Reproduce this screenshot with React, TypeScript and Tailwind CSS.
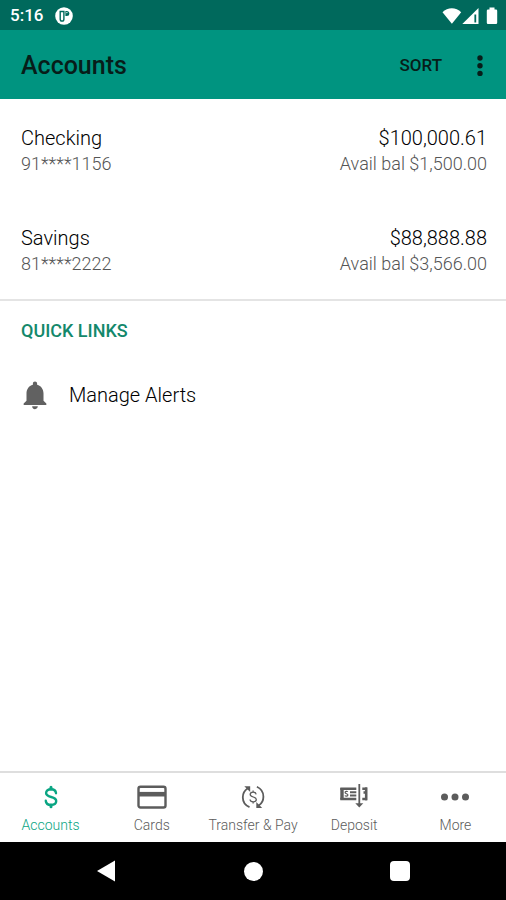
import type { ReactNode } from 'react';
import { MdNotifications } from 'react-icons/md';

const accounts = [
  { name: 'Checking', number: '91****1156', balance: '$100,000.61', available: '$1,500.00' },
  { name: 'Savings', number: '81****2222', balance: '$88,888.88', available: '$3,566.00' }
];

const tabs: { label: string; icon: ReactNode; active?: boolean }[] = [
  { label: 'Accounts', icon: <DollarIcon />, active: true },
  { label: 'Cards', icon: <CardIcon /> },
  { label: 'Transfer & Pay', icon: <TransferIcon /> },
  { label: 'Deposit', icon: <DepositIcon /> },
  { label: 'More', icon: <MoreIcon /> }
];

function DollarIcon() {
  return (
    <svg width="32" height="28" viewBox="0 0 32 28" fill="none" stroke="currentColor" strokeWidth="2.4" strokeLinecap="round">
      <path d="M21 10.2C20.8 7.6 18.8 6.2 16 6.2c-2.9 0-4.9 1.5-4.9 3.8 0 5.4 10.1 2.6 10.1 8 0 2.4-2.1 3.9-5.1 3.9-3.1 0-5.1-1.5-5.3-4.1" />
      <path d="M16 4.3v1.7M16 22v1.7" strokeWidth="3" />
    </svg>
  );
}

function CardIcon() {
  return (
    <svg width="32" height="28" viewBox="0 0 32 28" fill="none" stroke="currentColor">
      <rect x="2.5" y="3.7" width="27" height="20.8" rx="2" strokeWidth="2.4" />
      <path d="M2.5 11.2h27" strokeWidth="4.6" />
    </svg>
  );
}

function TransferIcon() {
  return (
    <svg width="32" height="28" viewBox="0 0 32 28" fill="none" stroke="currentColor" strokeWidth="1.8">
      <path d="M12.5 24.2C8 22.3 5.8 18.6 5.8 14.3c0-3.8 1.6-6.8 4.7-8.9" />
      <path d="M19.9 3.8c4.3 2 6.5 5.6 6.5 9.9 0 3.8-1.6 6.8-4.7 8.9" />
      <path d="M7.3 3.2h5.9v5.9z" fill="currentColor" stroke="none" />
      <path d="M25.2 25h-5.900v-5.900z" fill="currentColor" stroke="none" />
      <path d="M19.1 11.3c-.2-1.5-1.3-2.2-3-2.2s-2.9.9-2.9 2.3c0 3.2 6.1 2 6.1 5.1 0 1.5-1.3 2.3-3.1 2.3s-3-.8-3.200-2.300M16.1 7.500v1.600M16.1 18.8v1.7" strokeWidth="1.3" />
    </svg>
  );
}

function DepositIcon() {
  return (
    <svg width="32" height="28" viewBox="0 0 32 28" fill="none" stroke="currentColor">
      <path d="M4 5v11.5" strokeWidth="3.4" />
      <path d="M2.3 5.7h16M2.3 16h16" strokeWidth="2.6" />
      <path d="M12 9.2h6.3M12 12.5h6.3" strokeWidth="2" />
      <path d="M9.8 8.8c-.5-.8-2.7-.7-2.7.7 0 1.5 2.8 1 2.8 2.5 0 1.4-2.5 1.4-3 .4" strokeWidth="1.2" />
      <path d="M24.3 5.7h4.7M24.3 16h4.7M25.5 9.5h3" strokeWidth="2.6" />
      <path d="M28.2 4.4v12.9" strokeWidth="2.6" />
      <path d="M21.3 1v20.5" strokeWidth="1.8" />
      <path d="M17.3 20.3h8l-4 4.3z" fill="currentColor" stroke="none" />
    </svg>
  );
}

function MoreIcon() {
  return (
    <svg width="32" height="28" viewBox="0 0 32 28" fill="currentColor">
      <circle cx="5.5" cy="14" r="3.5" />
      <circle cx="16" cy="14" r="3.5" />
      <circle cx="26.5" cy="14" r="3.5" />
    </svg>
  );
}

function StatusBar() {
  return (
    <div className="flex h-[30px] items-center justify-between bg-[#00695c] pt-px pr-2 pl-[10px] text-white">
      <div className="flex items-center gap-3">
        <span className="text-[17px] font-medium">5:16</span>
        <svg width="18" height="18" viewBox="0 0 18 18">
          <circle cx="9" cy="9" r="8.8" fill="#fff" />
          <path d="M5.2 4.5h3.7v7.8a1.85 1.85 0 0 1-3.7 0z" fill="none" stroke="#00695c" strokeWidth="1.4" />
          <path d="M10.4 3.9h1.4a2.5 2.5 0 0 1 0 5h-1.400z" fill="#00695c" />
          <circle cx="11.9" cy="5.6" r="0.7" fill="#fff" />
        </svg>
      </div>
      <svg width="56" height="18" viewBox="0 0 56 18" fill="#fff">
        <path d="M.5 5.2C5.6-.2 14-.2 19.2 5.2L9.9 16.8z" />
        <path d="M36.5 1v16H20.3z" />
        <path d="M33.3 7.5v8" stroke="#00695c" strokeWidth="1.8" />
        <path d="M47.5.5h5v2H54q1.2 0 1.2 1.2v12.1q0 1.200-1.200 1.200h-8q-1.200 0-1.200-1.200V3.700q0-1.200 1.200-1.200h1.500z" />
      </svg>
    </div>
  );
}

function AppBar() {
  return (
    <header className="flex h-[69px] items-center justify-between bg-[#009480] pt-0.5 pr-4 pl-[21px] text-[#071d19]">
      <h1 className="text-[25px] font-medium">Accounts</h1>
      <div className="flex items-center gap-7">
        <button type="button" className="text-[17px] font-medium">SORT</button>
        <button type="button" aria-label="More options">
          <svg width="20" height="24" viewBox="0 0 20 24" fill="currentColor">
            <circle cx="10" cy="4" r="2.7" />
            <circle cx="10" cy="11.7" r="2.7" />
            <circle cx="10" cy="19.4" r="2.7" />
          </svg>
        </button>
      </div>
    </header>
  );
}

export default function App() {
  return (
    <div className="flex min-h-screen flex-col bg-white font-[Roboto,sans-serif]">
      <StatusBar />
      <AppBar />

      <main className="flex-1">
        <ul className="border-b-2 border-[#e4e4e4]">
          {accounts.map((account) => (
            <li key={account.name} className="flex h-[100px] items-center justify-between pt-1 pr-[19px] pl-[21px]">
              <div>
                <p className="text-[20px] leading-[25px] font-light text-black">{account.name}</p>
                <p className="text-[18px] leading-[25px] font-light text-[#555555]">{account.number}</p>
              </div>
              <div className="text-right">
                <p className="text-[20px] leading-[25px] font-light text-black">{account.balance}</p>
                <p className="text-[18px] leading-[25px] font-light text-[#555555]">Avail bal {account.available}</p>
              </div>
            </li>
          ))}
        </ul>

        <section className="pt-[18px] pr-[19px] pl-[21px]">
          <h2 className="text-[18px] leading-6 font-medium text-[#13886b]">QUICK LINKS</h2>
          <a href="#alerts" className="mt-[35px] flex items-center gap-4 text-[20px] font-light text-black">
            <MdNotifications className="-ml-[3px] text-[#616161]" size={34} />
            <span className="pl-px">Manage Alerts</span>
          </a>
        </section>
      </main>

      <nav className="flex h-[71px] border-t-2 border-[#dedede]">
        {tabs.map((tab) => (
          <a
            key={tab.label}
            href="#"
            className={`flex flex-1 basis-0 flex-col items-center gap-1 pt-[10px] text-[14px] leading-5 font-light whitespace-nowrap ${tab.active ? 'text-[#0aa583]' : 'text-[#5c5c5c]'}`}
          >
            {tab.icon}
            {tab.label}
          </a>
        ))}
      </nav>

      <div className="flex h-[58px] items-center justify-around bg-black px-[33px] text-white">
        <button type="button" aria-label="Back">
          <svg width="20" height="22" viewBox="0 0 20 22" fill="currentColor">
            <path d="M18 .5v21L0 11z" />
          </svg>
        </button>
        <button type="button" aria-label="Home" className="size-[19px] rounded-full bg-white" />
        <button type="button" aria-label="Recent apps" className="size-5 rounded-sm bg-white" />
      </div>
    </div>
  );
}
